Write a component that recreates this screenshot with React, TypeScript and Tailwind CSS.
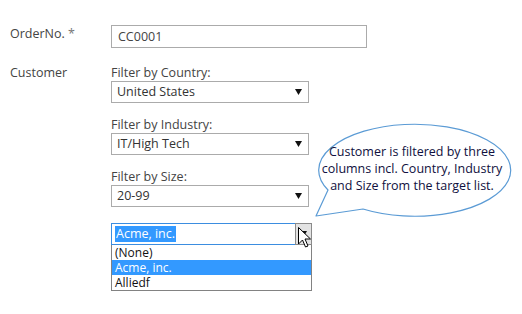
import React from 'react';

const font = { fontFamily: '"Open Sans", "Noto Sans", sans-serif' };

const Caret = () => (
  <svg width="7" height="6" viewBox="0 0 7 6" className="shrink-0">
    <path d="M0 0 H7 L3.5 6 Z" fill="#111" />
  </svg>
);

const FakeSelect = ({ value }: { value: string }) => (
  <div className="flex h-[22px] w-[198px] items-center justify-between border border-[#ababab] bg-white pl-[5px] pr-[6px] text-[12.5px] text-[#333]">
    <span>{value}</span>
    <Caret />
  </div>
);

const FilterGroup = ({ label, value }: { label: string; value: string }) => (
  <div className="flex flex-col">
    <div className="h-[17px] text-[12.5px] leading-[17px] text-[#444]">{label}</div>
    <FakeSelect value={value} />
  </div>
);

const ListRow = ({ text, selected }: { text: string; selected?: boolean }) => (
  <div className={`flex h-[15px] items-center pl-[3px] ${selected ? 'bg-[#3399ff] text-white' : ''}`}>
    <span className="leading-none">{text}</span>
  </div>
);

export default function App() {
  return (
    <div className="relative h-[314px] w-[522px] overflow-hidden bg-white" style={font}>
      <div className="flex flex-col pl-[10px] pt-[25px]">
        {/* Order number */}
        <div className="flex">
          <div className="w-[101px] pt-[1px] text-[12.5px] leading-[16px] text-[#444]">
            OrderNo. <span className="text-[#777]">*</span>
          </div>
          <div className="flex h-[23px] w-[256px] items-center border border-[#ababab] pl-[6px] pt-[1px] text-[12.5px] text-[#444]">
            CC0001
          </div>
        </div>

        {/* Customer */}
        <div className="mt-[16px] flex">
          <div className="w-[101px] pt-[1px] text-[12.5px] leading-[16px] text-[#444]">Customer</div>
          <div className="flex flex-col">
            <FilterGroup label="Filter by Country:" value="United States" />
            <div className="mt-[13px]">
              <FilterGroup label="Filter by Industry:" value="IT/High Tech" />
            </div>
            <div className="mt-[13px]">
              <FilterGroup label="Filter by Size:" value="20-99" />
            </div>

            {/* Combo box with open list */}
            <div className="mt-[16px] flex w-[201px] flex-col">
              <div className="flex h-[22px]">
                <div className="flex flex-1 items-center border border-r-0 border-[#3b8de0] pl-[3px]">
                  <span className="bg-[#3399ff] px-[1px] text-[12.5px] leading-[16px] text-white">Acme, inc.</span>
                </div>
                <div className="flex w-[17px] items-start justify-center border border-[#8a8a8a] bg-[#e3e3e3] pt-[7px]">
                  <Caret />
                </div>
              </div>
              <div className="flex flex-col border border-t-0 border-[#828282] text-[12px] text-[#111]">
                <ListRow text="(None)" />
                <ListRow text="Acme, inc." selected />
                <ListRow text="Alliedf" />
              </div>
            </div>
          </div>
        </div>
      </div>

      {/* Mouse pointer */}
      <svg className="absolute left-[298px] top-[227px]" width="14" height="22" viewBox="0 0 14 22">
        <path
          d="M0.5 0.5 V17 L4.5 13 L7.5 20 L10 19 L7 12 H12.5 Z"
          fill="#fff"
          stroke="#000"
          strokeWidth="1"
          strokeLinejoin="round"
        />
      </svg>

      {/* Callout bubble */}
      <svg className="absolute left-[310px] top-[114px]" width="205" height="106" viewBox="0 0 205 106">
        <path
          d="M18 76 A96 46 0 1 1 53 95 L6 102 Z"
          fill="#fff"
          stroke="#5b9bd5"
          strokeWidth="1.2"
          strokeLinejoin="round"
        />
      </svg>
      <div className="absolute left-[316px] top-[143px] w-[192px] text-center text-[12.5px] leading-[17px] text-[#101040]">
        Customer is filtered by three
        <br />
        columns incl. Country, Industry
        <br />
        and Size from the target list.
      </div>
    </div>
  );
}
